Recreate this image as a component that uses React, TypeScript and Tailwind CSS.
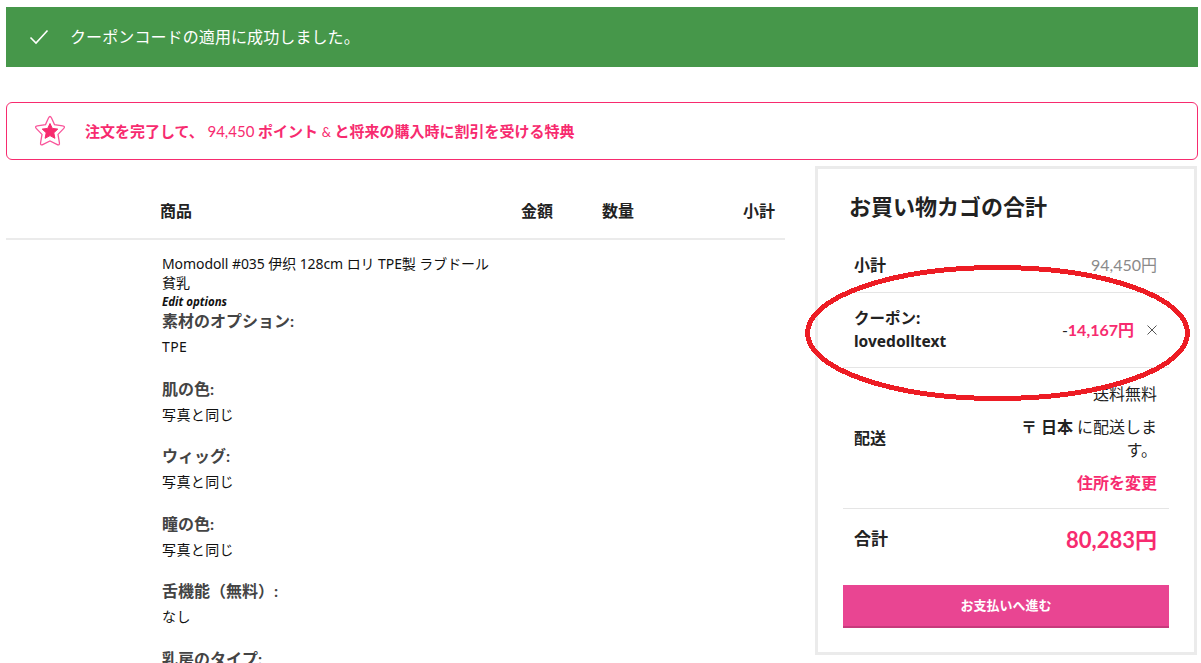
const font = { fontFamily: '"Lato","Noto Sans CJK JP",sans-serif' };
const latin = { fontFamily: '"Noto Sans","Noto Sans CJK JP",sans-serif' };

const options: [string, string][] = [
  ["素材のオプション:", "TPE"],
  ["肌の色:", "写真と同じ"],
  ["ウィッグ:", "写真と同じ"],
  ["瞳の色:", "写真と同じ"],
  ["舌機能（無料）:", "なし"],
  ["乳房のタイプ:", ""],
];

export default function App() {
  return (
    <div className="relative w-[1201px] h-[663px] overflow-hidden bg-white text-[#222]" style={font}>
      <div className="pl-[6px] pr-[3px] pt-[7px]">
        <div className="h-[60px] bg-[#46974a] text-white flex items-center pl-[23px] text-[16px]">
          <svg width="20" height="20" viewBox="0 0 20 20" fill="none" stroke="#fff" strokeWidth="1.6" className="mr-[21px]">
            <path d="M1.5 10.5 L7 16 L18.5 3.5" />
          </svg>
          <span className="tracking-[0.1px]">クーポンコードの適用に成功しました。</span>
        </div>

        <div className="mt-[35px] h-[58px] border border-[#f72b6f] rounded-[6px] flex items-center pl-[27px] text-[#f72b6f] text-[15px] font-bold">
          <svg width="32" height="32" viewBox="0 0 32 32" className="mr-[19px] shrink-0">
            <path d="M16 1.5 C16.8 1.5 17 2 17.4 2.8 L20.5 9.6 L28.6 10.8 C30.6 11.1 31 12.2 29.6 13.6 L24 19.4 L25.4 27.6 C25.8 29.8 24.8 30.5 22.8 29.4 L16 26 L9.2 29.4 C7.2 30.5 6.2 29.8 6.6 27.6 L8 19.4 L2.4 13.6 C1 12.2 1.4 11.1 3.4 10.8 L11.5 9.6 L14.6 2.8 C15 2 15.2 1.5 16 1.5 Z" fill="none" stroke="#f9559a" strokeWidth="1.3" />
            <path d="M16 8.5 L18.3 13.4 L23.8 14.1 L19.8 17.8 L20.9 23.3 L16 20.6 L11.1 23.3 L12.2 17.8 L8.2 14.1 L13.7 13.4 Z" fill="#f72b6f" stroke="#f72b6f" strokeWidth="1" strokeLinejoin="round" />
          </svg>
          <span>注文を完了して、 <span className="font-normal">94,450</span> ポイント <span className="text-[13px] font-normal">&amp;</span> と将来の購入時に割引を受ける特典</span>
        </div>

        <div className="flex items-start mt-[6px]">
          <div className="w-[779px] shrink-0">
            <div className="h-[74px] border-b-2 border-[#ebebeb] flex items-center font-bold text-[16px] pl-[154px] pr-[10px] pt-[18px]">
              <span className="w-[361px]">商品</span>
              <span className="w-[81px]">金額</span>
              <span>数量</span>
              <span className="ml-auto">小計</span>
            </div>
            <div className="pl-[156px] pt-[14px] text-[14px] text-[#111]">
              <div className="w-[340px] leading-[19px] tracking-[-0.08px]" style={latin}>Momodoll #035 伊织 128cm ロリ TPE製 ラブドール 貧乳</div>
              <div className="text-[11.5px] font-bold italic leading-[17px] mt-[1px]" style={latin}>Edit options</div>
              <div className="-mt-[2px]">
                {options.map(([k, v]) => (
                  <div key={k} className="h-[67.5px]">
                    <div className="text-[16px] font-bold text-[#444] leading-[24px] pt-[1px]">{k}</div>
                    <div className="text-[14px] leading-[20px] mt-[4px] tracking-[0.4px]" style={latin}>{v}</div>
                  </div>
                ))}
              </div>
            </div>
          </div>

          <div className="ml-[30px] w-[382px] h-[489px] border-[3px] border-[#ebebeb] px-[25px] shrink-0">
            <div className="text-[22px] font-bold pt-[22px] leading-[32px] pl-[6px]">お買い物カゴの合計</div>

            <div className="mt-[20px] h-[50px] border-b border-[#e5e5e5] flex items-center justify-between pl-[11px] pr-[12px] pb-[6px] text-[16px]">
              <span className="font-bold">小計</span>
              <span className="text-[#8a8a8a]">94,450円</span>
            </div>

            <div className="h-[75px] border-b border-[#e5e5e5] flex items-center justify-between pl-[11px] pr-[12px] pb-[1px] text-[16px]">
              <span className="font-bold text-[15.5px] leading-[23px]" style={latin}>クーポン:<br />lovedolltext</span>
              <span className="flex items-center font-bold text-[#f72b6f]">
                <span><span className="font-normal text-[#222]">-</span>14,167円</span>
                <svg width="10" height="10" viewBox="0 0 10 10" stroke="#555" strokeWidth="1" className="ml-[13px]">
                  <path d="M0.5 0.5 L9.5 9.5 M9.5 0.5 L0.5 9.5" />
                </svg>
              </span>
            </div>

            <div className="h-[141px] border-b border-[#e5e5e5] flex items-center justify-between pl-[11px] pr-[12px] text-[16px]">
              <span className="font-bold">配送</span>
              <div className="text-right w-[140px] leading-[23px]">
                <div>送料無料</div>
                <div className="mt-[10px]"><span className="font-bold">〒 日本</span> に配送します。</div>
                <div className="mt-[10px] font-bold text-[#f72b6f]">住所を変更</div>
              </div>
            </div>

            <div className="h-[76px] pb-[16px] flex items-center justify-between pl-[11px] pr-[12px]">
              <span className="font-bold text-[17px]">合計</span>
              <span className="text-[22px] font-bold text-[#f72b6f]">80,283円</span>
            </div>

            <div className="h-[43px] bg-[#e94592] border-b-2 border-[#c73a7c] flex items-center justify-center text-white font-bold text-[13px]">
              お支払いへ進む
            </div>
          </div>
        </div>
      </div>

      <svg className="absolute left-[800px] top-[260px] pointer-events-none" width="396" height="146" viewBox="0 0 396 146" fill="none" shapeRendering="crispEdges">
        <ellipse cx="197.5" cy="73" rx="190" ry="65.5" stroke="#ed1c24" strokeWidth="5" />
      </svg>
    </div>
  );
}
